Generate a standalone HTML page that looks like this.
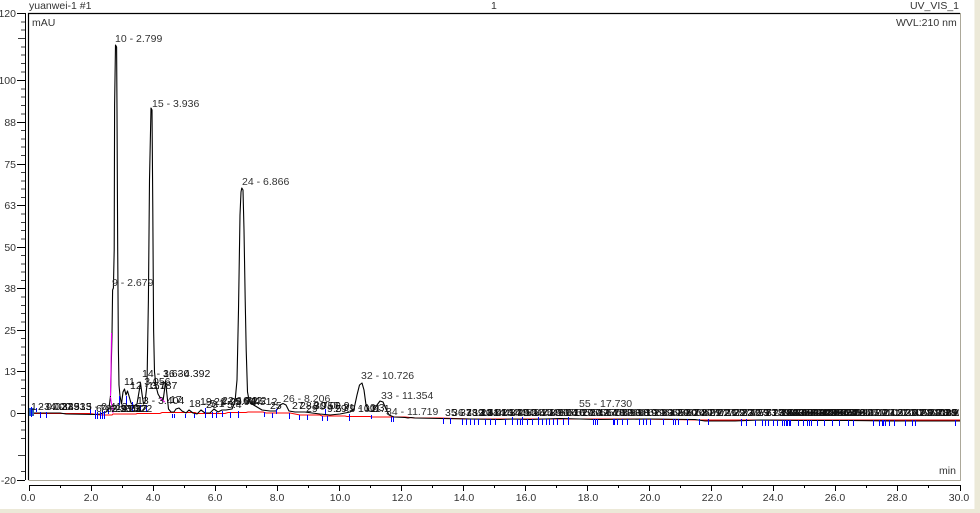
<!DOCTYPE html>
<html><head><meta charset="utf-8"><style>
html,body{margin:0;padding:0;background:#fff;width:980px;height:513px;overflow:hidden}
svg{display:block}
text{font-family:"Liberation Sans",sans-serif;font-size:10.5px;fill:#333}
.m{text-anchor:middle}
.r{text-anchor:end}
.c text{fill:#111}
</style></head><body>
<svg width="980" height="513" viewBox="0 0 980 513" xmlns="http://www.w3.org/2000/svg">
<defs><clipPath id="pc"><rect x="29" y="14" width="930" height="466"/></clipPath></defs>
<rect x="0" y="0" width="980" height="513" fill="#fff"/>
<rect x="975" y="0" width="5" height="513" fill="#ece9d8"/>
<rect x="0" y="509" width="980" height="4" fill="#ece9d8"/>
<rect x="974" y="0" width="1" height="509" fill="#f5f3ea"/>
<!-- header -->
<text x="29" y="9">yuanwei-1 #1</text>
<text x="491" y="9">1</text>
<text x="959" y="9" class="r">UV_VIS_1</text>
<!-- frame -->
<path d="M28.5 13.5H960.5V480.5H28.5" fill="none" stroke="#aca899" stroke-width="1"/>
<path d="M28.5 480V13.5H960" fill="none" stroke="#000" stroke-width="1.2"/>
<!-- y axis -->
<path d="M25.5 13V480" stroke="#000" fill="none"/>
<path d="M17 13.5H25M17 80.5H25M17 122.5H25M17 164.5H25M17 205.5H25M17 247.5H25M17 288.5H25M17 330.5H25M17 371.5H25M17 413.5H25M17 480.5H25" stroke="#000" fill="none"/>
<path d="M21 22H25M21 30H25M18 38.5H25M21 47H25M21 55H25M21 63.5H25M21 72H25M21 89H25M21 97H25M21 105.5H25M21 114H25M21 130.5H25M21 139H25M21 147H25M21 155.5H25M21 172.5H25M21 181H25M21 189H25M21 197.5H25M21 214H25M21 222.5H25M21 230.5H25M21 239H25M21 255.5H25M21 264H25M21 272H25M21 280.5H25M21 297H25M21 305.5H25M21 313.5H25M21 322H25M21 338.5H25M21 347H25M21 355H25M21 363.5H25M21 380H25M21 388.5H25M21 396.5H25M21 405H25M21 421.5H25M21 430H25M21 438.5H25M18 455.5H25M21 471.5H25" stroke="#000" stroke-width=".8" fill="none"/>
<text x="16" y="17" class="r">120</text>
<text x="16" y="84" class="r">100</text>
<text x="16" y="126" class="r">88</text>
<text x="16" y="168" class="r">75</text>
<text x="16" y="209" class="r">63</text>
<text x="16" y="251" class="r">50</text>
<text x="16" y="292" class="r">38</text>
<text x="16" y="334" class="r">25</text>
<text x="16" y="375" class="r">13</text>
<text x="16" y="417" class="r">0</text>
<text x="16" y="484" class="r">-20</text>
<!-- x axis -->
<path d="M29 485.5H961" stroke="#000" fill="none"/>
<path d="M29.5 485V491M91.5 485V491M153.5 485V491M215.5 485V491M277.5 485V491M339.5 485V491M401.5 485V491M463.5 485V491M525.5 485V491M587.5 485V491M649.5 485V491M711.5 485V491M773.5 485V491M835.5 485V491M897.5 485V491M960.5 485V491" stroke="#000" fill="none"/>
<path d="M60.5 485V488M122.5 485V488M184.5 485V488M246.5 485V488M308.5 485V488M370.5 485V488M432.5 485V488M494.5 485V488M556.5 485V488M618.5 485V488M680.5 485V488M742.5 485V488M804.5 485V488M866.5 485V488M928.5 485V488" stroke="#000" fill="none"/>
<text x="28" y="501" class="m">0.0</text>
<text x="91" y="501" class="m">2.0</text>
<text x="153" y="501" class="m">4.0</text>
<text x="215" y="501" class="m">6.0</text>
<text x="277" y="501" class="m">8.0</text>
<text x="340" y="501" class="m">10.0</text>
<text x="402" y="501" class="m">12.0</text>
<text x="464" y="501" class="m">14.0</text>
<text x="526" y="501" class="m">16.0</text>
<text x="588" y="501" class="m">18.0</text>
<text x="650" y="501" class="m">20.0</text>
<text x="712" y="501" class="m">22.0</text>
<text x="773" y="501" class="m">24.0</text>
<text x="835" y="501" class="m">26.0</text>
<text x="897" y="501" class="m">28.0</text>
<text x="959" y="501" class="m">30.0</text>
<!-- plot labels -->
<text x="32" y="26">mAU</text>
<text x="896" y="26">WVL:210 nm</text>
<text x="939" y="474">min</text>
<!-- red baseline -->
<path d="M30 413.5H90L100 415H112L113 414H136L137 413.5H160L162 412.5H195L197 413.5H225L228 412.5H246L248 412H263L266 413H290L300 415H320L322 416H345L347 416.5H370L372 417H405L415 418H440L470 419H640L700 420H960" fill="none" stroke="#ff0000" stroke-width="1"/>
<!-- chromatogram -->
<path d="M29 413L60 413L66 414L95 414.5L100 414L106 412L109 408L110.5 396L112 335L112.6 290L113.4 288L114.2 250L114.6 105L115.5 45L116.6 47L117 110L117.7 250L118.4 350L119 385L120 396L121.5 404L123 392L124.5 389L126 395L127.5 391L129 396L131 403L134 406L137 404L139 392L140.5 383L142 394L143.5 404L145 402L147 385L148.4 300L149.5 180L151 108L152 110L152.8 210L153.6 330L154.5 372L156 386L158 394L161 399L163 401L164.5 390L165.5 381L167 395L168.5 409L171 412L174 412L176 409L179 408L182 411L186 413L189 410L193 413L197 414L201 410L205 413L210 413L214 409L218 412L222 410L226 410L232 409L235 402L237 380L238.5 310L240 215L241 192L241.8 188L243 190L244 230L245.2 300L246.2 350L247.5 392L249 400L252 404L257 407L262 410L270 411L276 411L280 405L283 403.5L286 405L289 411L295 412L305 412L312 413L320 414L330 415L340 414L350 412L354 409L357 395L359.5 385L362 383L364 390L366 405L369 411L373 411.5L377 405L380 401L383 402L386 409L389 415L394 417L405 417.5L408 418L411 417.5L415 418L440 418.5L470 419L500 419.5L512 419L530 419.5L560 418.5L580 419L596 419.5L650 419L695 419.5L705 421L735 421L760 420L800 420.5L848 420.5L900 421L960 421" fill="none" stroke="#000" stroke-width="1.1" stroke-linejoin="round"/>
<!-- magenta -->
<path d="M110.5 396L111.5 333M160 398L165 402M113 413L110.5 397" stroke="#ff00ff" stroke-width="1" fill="none"/>
<!-- blue ticks -->
<rect x="29" y="408" width="5" height="8" fill="#2b5fb3"/>
<path d="M31.5 407V417M36.5 408V412M40.5 412V418M46.5 412V418M90.5 408V414M95.5 410V419M97.5 412V419M100.5 412V419M102.5 411V419M104.5 411V419M108.5 410V414M119.5 396V405M126.5 396V405M132.5 402V412M140.5 405V412M146.5 405V412M172.5 414V418M174.5 414V418M185.5 414V418M194.5 414V418M205.5 408V418M212.5 412V418M216.5 412V418M222.5 411V417M230.5 412V418M238.5 411V418M264.5 412V417M272.5 413V418M276.5 409V414M289.5 413V419M299.5 415V420M307.5 415V420M322.5 416V421M327.5 416V421M325.5 409V414M349.5 414V421M371.5 415V419M391.5 417V422M393.5 417V422M443.5 418V424M450.5 418V424M462.5 419V425M466.5 419V425M470.5 419V425M474.5 419V425M478.5 419V425M485.5 419V425M490.5 419V425M495.5 419V425M505.5 419V425M512.5 417V425M517.5 419V425M520.5 419V425M522.5 417V425M527.5 419V425M532.5 419V425M538.5 417V425M542.5 419V425M546.5 419V425M549.5 419V425M553.5 419V425M557.5 419V425M563.5 419V425M568.5 417V425M593.5 419V425M595.5 419V425M597.5 419V425M613.5 419V425M614.5 419V425M617.5 419V425M622.5 419V425M627.5 419V425M639.5 419V425M643.5 419V425M646.5 419V425M650.5 419V425M663.5 419V425M673.5 419V425M675.5 419V425M678.5 419V425M687.5 419V425M699.5 419V425M708.5 419V425M741.5 419V426M746.5 419V426M755.5 420V426M762.5 420V426M765.5 420V426M768.5 420V426M773.5 420V426M777.5 420V426M782.5 420V426M784.5 420V426M786.5 420V426M787.5 420V426M789.5 420V426M790.5 420V426M798.5 420V426M803.5 420V426M807.5 420V426M809.5 420V426M811.5 420V426M817.5 420V426M824.5 420V426M832.5 420V426M839.5 420V426M848.5 420V426M853.5 420V426M873.5 420V426M879.5 420V426M882.5 420V426M883.5 420V426M885.5 420V426M889.5 420V426M894.5 420V426M905.5 420V426M912.5 420V426M915.5 420V426M955.5 420V426" stroke="#0000ff" stroke-width="1" fill="none"/>
<!-- main labels -->
<text x="115" y="42">10 - 2.799</text>
<text x="152" y="107">15 - 3.936</text>
<text x="242" y="185">24 - 6.866</text>
<text x="112" y="286">9 - 2.679</text>
<text x="361" y="379">32 - 10.726</text>
<text x="381" y="399">33 - 11.354</text>
<text x="579" y="407">55 - 17.730</text>
<text x="283" y="402">26 - 8.206</text>
<text x="386" y="415">34 - 11.719</text>
<!-- cluttered labels -->
<g class="c" clip-path="url(#pc)">
<text x="31" y="410">1 - 0.027</text><text x="38" y="410">2 - 0.339</text><text x="44" y="410">3 - 0.433</text><text x="50" y="410">4 - 0.513</text><text x="86" y="410">5 - 0.413</text><text x="96" y="412">6 - 2.1</text>
<text x="100" y="412">7 - 2.203</text><text x="106" y="412">8 - 2.512</text><text x="112" y="412">2.915</text><text x="120" y="412">3.212</text><text x="126" y="412">3.372</text>
<text x="124" y="385">11 - 3.056</text><text x="130" y="389">12 - 3.187</text><text x="142" y="377">14 - 3.630</text><text x="163" y="377">16 - 4.392</text><text x="137" y="404">13 - 3.404</text><text x="145" y="389">.157</text>
<text x="170" y="403">17</text><text x="189" y="407">18 - 5.1</text><text x="200" y="405">19 - 4.9</text><text x="206" y="408">20 - 5.4</text><text x="214" y="405">21 - 5.98</text><text x="222" y="404">22 - 6.2</text><text x="230" y="405">23 - 6.512</text><text x="236" y="404">6.942</text><text x="246" y="404">7.42</text>
<text x="270" y="409">25</text><text x="292" y="409">27 - 8.757</text><text x="300" y="409">28 - 9.0</text><text x="306" y="412">29 - 9.5</text><text x="314" y="409">30 - 9.9</text><text x="335" y="412">29.9</text><text x="343" y="411">31 - 10.3</text><text x="358" y="412">10.9</text><text x="370" y="412">11.1</text>
<text x="445" y="416">35 - 13.2</text><text x="452" y="416">36 - 13.5</text><text x="460" y="416">37 - 13.9</text><text x="466" y="416">38 - 14.1</text><text x="472" y="416">39 - 14.3</text>
<text x="480" y="416">40 - 14.7</text><text x="488" y="416">41 - 14.9</text><text x="496" y="416">42 - 15.2</text><text x="504" y="416">43 - 15.4</text><text x="512" y="416">44 - 15.7</text><text x="520" y="416">45 - 15.9</text><text x="528" y="416">46 - 16.1</text><text x="536" y="416">47 - 16.4</text><text x="544" y="416">48 - 16.6</text><text x="552" y="416">49 - 16.9</text><text x="560" y="416">50 - 17.0</text><text x="568" y="416">51 - 17.2</text><text x="576" y="416">52 - 17.4</text><text x="584" y="416">53 - 17.6</text><text x="592" y="416">54 - 18.2</text><text x="600" y="416">56 - 18.3</text><text x="608" y="416">57 - 18.8</text><text x="616" y="416">58 - 18.9</text><text x="624" y="416">59 - 19.1</text><text x="632" y="416">60 - 19.3</text><text x="640" y="416">61 - 19.7</text><text x="648" y="416">62 - 19.9</text><text x="656" y="416">63 - 20.0</text><text x="664" y="416">64 - 20.4</text><text x="672" y="416">65 - 20.7</text><text x="680" y="416">66 - 20.9</text><text x="688" y="416">67 - 21.2</text><text x="696" y="416">68 - 21.6</text><text x="704" y="416">69 - 21.9</text><text x="712" y="416">70 - 22.3</text><text x="720" y="416">71 - 22.6</text><text x="728" y="416">72 - 22.9</text><text x="736" y="416">73 - 23.1</text><text x="744" y="416">74 - 23.3</text><text x="752" y="416">75 - 23.5</text><text x="760" y="416">76 - 23.7</text><text x="766" y="416">77 - 23.8</text><text x="772" y="416">78 - 23.9</text><text x="778" y="416">79 - 24.1</text><text x="783" y="416">80 - 24.3</text><text x="786" y="416">81 - 24.4</text><text x="789" y="416">82 - 24.4</text><text x="792" y="416">83 - 24.5</text><text x="795" y="416">84 - 24.5</text><text x="798" y="416">85 - 24.8</text><text x="801" y="416">86 - 24.9</text><text x="804" y="416">87 - 25.0</text><text x="807" y="416">88 - 25.1</text><text x="810" y="416">89 - 25.2</text><text x="813" y="416">90 - 25.3</text><text x="816" y="416">91 - 25.4</text><text x="820" y="416">92 - 25.6</text><text x="824" y="416">93 - 25.9</text><text x="828" y="416">94 - 26.1</text><text x="832" y="416">95 - 26.4</text><text x="838" y="416">96 - 26.5</text><text x="846" y="416">97 - 27.2</text><text x="854" y="416">98 - 27.4</text><text x="862" y="416">99 - 27.5</text><text x="870" y="416">100 - 27.6</text><text x="878" y="416">101 - 27.7</text><text x="886" y="416">102 - 27.9</text><text x="894" y="416">103 - 28.2</text><text x="902" y="416">104 - 28.3</text><text x="910" y="416">105 - 28.5</text><text x="918" y="416">106 - 28.6</text><text x="926" y="416">107 - 29.0</text><text x="934" y="416">108 - 29.4</text><text x="940" y="416">109 - 29.7</text><text x="946" y="416">110 - 29.8</text>
</g>
</svg>
</body></html>
